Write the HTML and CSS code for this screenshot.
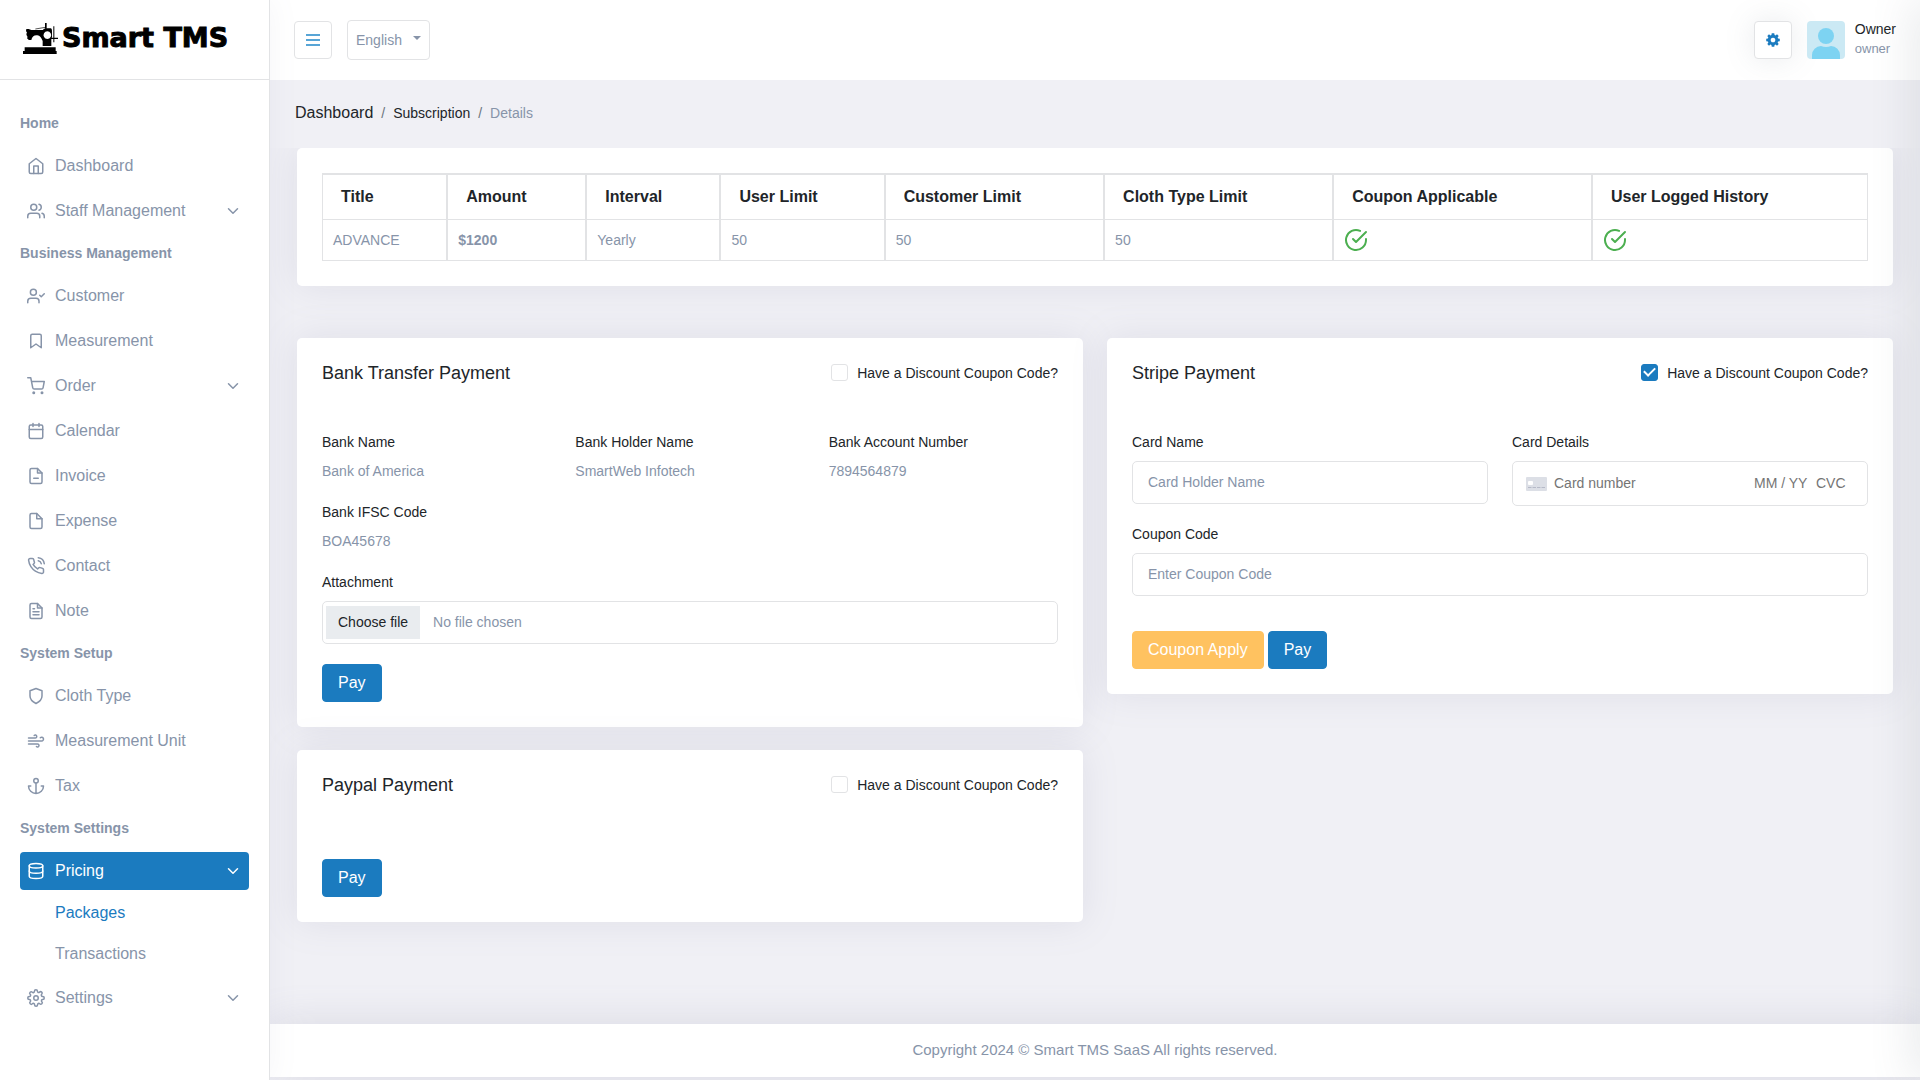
FILE: index.html
```html
<!DOCTYPE html>
<html lang="en">
<head>
<meta charset="utf-8">
<meta name="viewport" content="width=device-width, initial-scale=1">
<title>Smart TMS - Subscription Details</title>
<link rel="stylesheet" href="styles.css">
</head>
<body>
<svg class="sprite" aria-hidden="true">
  <symbol id="chevron" viewBox="0 0 24 24"><path d="M6 9l6 6 6-6"/></symbol>
  <symbol id="check-circle" viewBox="0 0 24 24"><path d="M22 11.08V12a10 10 0 1 1-5.93-9.14"/><path d="M22 4L12 14.01l-3-3"/></symbol>
</svg>
<div class="app">
  <aside class="sidebar">
    <a class="brand" href="#">
      <svg class="brand-mark" viewBox="20 14 111 102" aria-hidden="true">
        <path d="M28 93H121V104H124V113H23V104H28Z"/>
        <path fill-rule="evenodd" d="M33 38H40L48 41H84V38L92 36H106C109 37 110 40 110 44V64H108V89H82V74C78 64 74 58 66 57C56 56 50 61 48 71H39V68H36V60C33 57 32 52 35 49L32 44ZM96 45a11.500 11.500 0 1 0 0.100 0Z"/>
        <path d="M89 20H94V37H89ZM114 30H117V78H114ZM106 64H128V68H106Z"/>
        <path d="M60 38L90 33" fill="none" stroke="#000" stroke-width="2"/>
      </svg>
      <span>Smart TMS</span>
    </a>
    <nav class="nav" aria-label="Main">
      <h2 class="nav-heading">Home</h2>
      <ul class="nav-list">
        <li><a class="nav-link" href="#"><svg class="icon" viewBox="0 0 24 24"><path d="M3 9l9-7 9 7v11a2 2 0 0 1-2 2H5a2 2 0 0 1-2-2z"/><path d="M9 22V12h6v10"/></svg>Dashboard</a></li>
        <li><a class="nav-link" href="#"><svg class="icon" viewBox="0 0 24 24"><path d="M17 21v-2a4 4 0 0 0-4-4H5a4 4 0 0 0-4 4v2"/><circle cx="9" cy="7" r="4"/><path d="M23 21v-2a4 4 0 0 0-3-3.870M16 3.130a4 4 0 0 1 0 7.750"/></svg>Staff Management<svg class="icon chevron"><use href="#chevron"/></svg></a></li>
      </ul>
      <h2 class="nav-heading">Business Management</h2>
      <ul class="nav-list">
        <li><a class="nav-link" href="#"><svg class="icon" viewBox="0 0 24 24"><path d="M16 21v-2a4 4 0 0 0-4-4H5a4 4 0 0 0-4 4v2"/><circle cx="8.500" cy="7" r="4"/><path d="M17 11l2 2 4-4"/></svg>Customer</a></li>
        <li><a class="nav-link" href="#"><svg class="icon" viewBox="0 0 24 24"><path d="M19 21l-7-5-7 5V5a2 2 0 0 1 2-2h10a2 2 0 0 1 2 2z"/></svg>Measurement</a></li>
        <li><a class="nav-link" href="#"><svg class="icon" viewBox="0 0 24 24"><circle cx="9" cy="21" r="1"/><circle cx="20" cy="21" r="1"/><path d="M1 1h4l2.680 13.390a2 2 0 0 0 2 1.610h9.720a2 2 0 0 0 2-1.610L23 6H6"/></svg>Order<svg class="icon chevron"><use href="#chevron"/></svg></a></li>
        <li><a class="nav-link" href="#"><svg class="icon" viewBox="0 0 24 24"><rect x="3" y="4" width="18" height="18" rx="2"/><path d="M16 2v4M8 2v4M3 10h18"/></svg>Calendar</a></li>
        <li><a class="nav-link" href="#"><svg class="icon" viewBox="0 0 24 24"><path d="M14 2H6a2 2 0 0 0-2 2v16a2 2 0 0 0 2 2h12a2 2 0 0 0 2-2V8z"/><path d="M14 2v6h6M9 15h6"/></svg>Invoice</a></li>
        <li><a class="nav-link" href="#"><svg class="icon" viewBox="0 0 24 24"><path d="M13 2H6a2 2 0 0 0-2 2v16a2 2 0 0 0 2 2h12a2 2 0 0 0 2-2V9z"/><path d="M13 2v7h7"/></svg>Expense</a></li>
        <li><a class="nav-link" href="#"><svg class="icon" viewBox="0 0 24 24"><path d="M15.050 5A5 5 0 0 1 19 8.950M15.050 1A9 9 0 0 1 23 8.940M22 16.920v3a2 2 0 0 1-2.180 2 19.790 19.790 0 0 1-8.630-3.070 19.500 19.500 0 0 1-6-6 19.790 19.790 0 0 1-3.070-8.670A2 2 0 0 1 4.110 2h3a2 2 0 0 1 2 1.720 12.840 12.840 0 0 0 .7 2.810 2 2 0 0 1-.45 2.110L8.090 9.910a16 16 0 0 0 6 6l1.270-1.270a2 2 0 0 1 2.110-.45 12.840 12.840 0 0 0 2.810.7A2 2 0 0 1 22 16.920z"/></svg>Contact</a></li>
        <li><a class="nav-link" href="#"><svg class="icon" viewBox="0 0 24 24"><path d="M14 2H6a2 2 0 0 0-2 2v16a2 2 0 0 0 2 2h12a2 2 0 0 0 2-2V8z"/><path d="M14 2v6h6M16 13H8M16 17H8M10 9H8"/></svg>Note</a></li>
      </ul>
      <h2 class="nav-heading">System Setup</h2>
      <ul class="nav-list">
        <li><a class="nav-link" href="#"><svg class="icon" viewBox="0 0 24 24"><path d="M12 22s8-4 8-10V5l-8-3-8 3v7c0 6 8 10 8 10z"/></svg>Cloth Type</a></li>
        <li><a class="nav-link" href="#"><svg class="icon" viewBox="0 0 24 24"><path d="M9.590 4.590A2 2 0 1 1 11 8H2m10.590 11.410A2 2 0 1 0 14 16H2m15.730-8.270A2.500 2.500 0 1 1 19.500 12H2"/></svg>Measurement Unit</a></li>
        <li><a class="nav-link" href="#"><svg class="icon" viewBox="0 0 24 24"><circle cx="12" cy="5" r="3"/><path d="M12 22V8M5 12H2a10 10 0 0 0 20 0h-3"/></svg>Tax</a></li>
      </ul>
      <h2 class="nav-heading">System Settings</h2>
      <ul class="nav-list">
        <li>
          <a class="nav-link active" href="#"><svg class="icon" viewBox="0 0 24 24"><ellipse cx="12" cy="5" rx="9" ry="3"/><path d="M21 12c0 1.660-4 3-9 3s-9-1.340-9-3"/><path d="M3 5v14c0 1.660 4 3 9 3s9-1.340 9-3V5"/></svg>Pricing<svg class="icon chevron"><use href="#chevron"/></svg></a>
          <ul class="subnav">
            <li><a class="current" href="#">Packages</a></li>
            <li><a href="#">Transactions</a></li>
          </ul>
        </li>
        <li><a class="nav-link" href="#"><svg class="icon" viewBox="0 0 24 24"><circle cx="12" cy="12" r="3"/><path d="M19.400 15a1.650 1.650 0 0 0 .33 1.820l.06.06a2 2 0 0 1-2.830 2.830l-.06-.06a1.650 1.650 0 0 0-2.800 1.170V21a2 2 0 0 1-4 0v-.09A1.650 1.650 0 0 0 7.180 19.730l-.06.06a2 2 0 0 1-2.830-2.830l.06-.06a1.650 1.650 0 0 0-1.170-2.800H3a2 2 0 0 1 0-4h.09A1.650 1.650 0 0 0 4.270 7.180l-.06-.06a2 2 0 0 1 2.830-2.830l.06.06a1.650 1.650 0 0 0 2.800-1.170V3a2 2 0 0 1 4 0v.09a1.650 1.650 0 0 0 2.800 1.170l.06-.06a2 2 0 0 1 2.830 2.830l-.06.06a1.650 1.650 0 0 0 1.170 2.800H21a2 2 0 0 1 0 4h-.09a1.650 1.650 0 0 0-1.510 1z"/></svg>Settings<svg class="icon chevron"><use href="#chevron"/></svg></a></li>
      </ul>
    </nav>
  </aside>

  <div class="page">
    <header class="topbar">
      <button class="icon-button menu-button" type="button" aria-label="Toggle menu"><svg viewBox="0 0 14 14" width="14" height="14"><path d="M0 2h14M0 7h14M0 12h14" stroke="currentColor" stroke-width="2"/></svg></button>
      <div class="language">
        <select aria-label="Language"><option>English</option></select>
      </div>
      <div class="account">
        <button class="icon-button gear-button" type="button" aria-label="Settings"><svg viewBox="0 0 512 512" width="14" height="14"><path fill="currentColor" fill-rule="evenodd" d="M210 8h92l12 66 34 14 55-38 61 61-38 55 14 34 64 10v92l-64 10-14 34 38 55-61 61-55-38-34 14-12 66h-92l-12-66-34-14-55 38-61-61 38-55-14-34-64-10v-92l64-10 14-34-38-55 61-61 55 38 34-14zM256 170a86 86 0 1 0 .1 0z"/></svg></button>
        <svg class="avatar" viewBox="0 0 38 38" role="img" aria-label="Owner avatar"><rect width="38" height="38" fill="#cbe9f4"/><circle cx="19" cy="15" r="8" fill="#7dd3f2"/><path d="M5 38v-4a9 9 0 0 1 9-9q5 2 10 0a9 9 0 0 1 9 9v4z" fill="#7dd3f2"/></svg>
        <div class="account-text"><span class="account-name">Owner</span><span class="account-role">owner</span></div>
      </div>
    </header>

    <nav class="breadcrumb" aria-label="Breadcrumb">
      <a class="crumb-root" href="#">Dashboard</a><span>/</span><a href="#">Subscription</a><span>/</span><span class="crumb-current">Details</span>
    </nav>

    <main class="content">
      <section class="card">
        <table class="plan">
          <thead><tr><th>Title</th><th>Amount</th><th>Interval</th><th>User Limit</th><th>Customer Limit</th><th>Cloth Type Limit</th><th>Coupon Applicable</th><th>User Logged History</th></tr></thead>
          <tbody><tr><td>ADVANCE</td><td><b>$1200</b></td><td>Yearly</td><td>50</td><td>50</td><td>50</td><td><svg class="yes" role="img" aria-label="Yes"><use href="#check-circle"/></svg></td><td><svg class="yes" role="img" aria-label="Yes"><use href="#check-circle"/></svg></td></tr></tbody>
        </table>
      </section>

      <div class="payments">
        <div class="column">
          <section class="card">
            <div class="card-head"><h1>Bank Transfer Payment</h1><label class="coupon-toggle"><input type="checkbox">Have a Discount Coupon Code?</label></div>
            <form>
              <dl class="bank">
                <div><dt>Bank Name</dt><dd>Bank of America</dd></div>
                <div><dt>Bank Holder Name</dt><dd>SmartWeb Infotech</dd></div>
                <div><dt>Bank Account Number</dt><dd>7894564879</dd></div>
                <div><dt>Bank IFSC Code</dt><dd>BOA45678</dd></div>
              </dl>
              <div class="field">
                <label for="attachment">Attachment</label>
                <div class="control file"><span class="file-button">Choose file</span><span>No file chosen</span><input id="attachment" type="file"></div>
              </div>
              <div class="actions"><button class="btn" type="button">Pay</button></div>
            </form>
          </section>
          <section class="card">
            <div class="card-head"><h1>Paypal Payment</h1><label class="coupon-toggle"><input type="checkbox">Have a Discount Coupon Code?</label></div>
            <form><div class="actions actions-only"><button class="btn" type="button">Pay</button></div></form>
          </section>
        </div>

        <div class="column">
          <section class="card">
            <div class="card-head"><h1>Stripe Payment</h1><label class="coupon-toggle"><input type="checkbox" checked>Have a Discount Coupon Code?</label></div>
            <form>
              <div class="fields">
                <div class="field"><label for="card-name">Card Name</label><input class="control" id="card-name" type="text" placeholder="Card Holder Name"></div>
                <div class="field">
                  <label for="card-number">Card Details</label>
                  <div class="control card-details">
                    <svg viewBox="0 0 21 14" width="21" height="14" aria-hidden="true"><rect width="21" height="14" rx="1" fill="#dcdfe6"/><rect x="2" y="4" width="5" height="4" rx="1" fill="#fff"/><path d="M2 10.500h17" stroke="#b6bac8" stroke-dasharray="3.500 1"/></svg>
                    <input id="card-number" class="number" type="text" placeholder="Card number">
                    <input class="expiry" type="text" placeholder="MM / YY" aria-label="Expiry date">
                    <input class="cvc" type="text" placeholder="CVC" aria-label="Security code">
                  </div>
                </div>
                <div class="field wide"><label for="coupon">Coupon Code</label><input class="control" id="coupon" type="text" placeholder="Enter Coupon Code"></div>
              </div>
              <div class="actions actions-spaced"><button class="btn btn-warning" type="button">Coupon Apply</button><button class="btn" type="button">Pay</button></div>
            </form>
          </section>
        </div>
      </div>
    </main>

    <footer class="footer">Copyright 2024 © Smart TMS SaaS All rights reserved.</footer>
  </div>
</div>
</body>
</html>
```
FILE: styles.css
```css
:root {
  --primary: #1b7bbf;
  --muted: #8794a9;
  --ink: #212529;
  --line: #e2e3e5;
  --page: #f0f0f5;
  --shadow: 0 0 36px rgba(130, 130, 160, 0.15);
}

* { box-sizing: border-box; }

body {
  margin: 0;
  background: var(--page);
  color: var(--ink);
  font: 14px/21px "Liberation Sans", Arial, sans-serif;
}

body::after {
  content: "";
  position: fixed;
  z-index: 5;
  top: 0;
  bottom: 0;
  right: -20px;
  width: 20px;
  box-shadow: 0 0 45px rgba(120, 130, 140, 0.3);
  pointer-events: none;
}

a { color: inherit; text-decoration: none; }
ul, dl, dd, h1, h2 { margin: 0; padding: 0; }
ul { list-style: none; }
button, input, select { font: inherit; color: inherit; }
.sprite { display: none; }

.app {
  display: grid;
  grid-template-columns: 270px minmax(0, 1fr);
  min-height: 100vh;
}

/* Sidebar */
.sidebar {
  position: relative;
  z-index: 3;
  background: #fff;
  border-right: 1px solid var(--line);
  box-shadow: 0 0 28px rgba(130, 130, 160, 0.08);
  color: var(--muted);
}

.brand {
  display: flex;
  align-items: center;
  gap: 3px;
  height: 80px;
  padding: 0 22px 4px;
  border-bottom: 1px solid var(--line);
  color: #000;
  font: bold 27px/32px "DejaVu Sans", sans-serif;
  -webkit-text-stroke: 1px #000;
  white-space: nowrap;
}

.brand-mark { flex: none; width: 37px; height: 34px; }

.nav { padding: 27px 20px 20px; }
.nav-heading { padding: 6px 0 13px; font-size: 14px; line-height: 21px; }
.nav-list > li { padding-bottom: 7px; }

.nav-link {
  display: flex;
  align-items: center;
  gap: 10px;
  height: 38px;
  padding: 0 7px;
  border-radius: 4px;
  font-size: 16px;
  line-height: 24px;
}

.nav-link.active { background: var(--primary); color: #fff; }

.icon {
  flex: none;
  width: 18px;
  height: 18px;
  fill: none;
  stroke: currentColor;
  stroke-width: 2;
  stroke-linecap: round;
  stroke-linejoin: round;
}

.chevron { margin-left: auto; }

.subnav { display: grid; gap: 5px; margin-top: 5px; padding-left: 35px; font-size: 16px; line-height: 36px; }
.subnav a { display: block; }
.subnav .current { color: var(--primary); }

/* Page frame */
.page { display: flex; flex-direction: column; min-width: 0; }

.topbar {
  display: flex;
  align-items: center;
  height: 80px;
  padding: 0 24px;
  background: #fff;
}

.icon-button {
  display: grid;
  place-items: center;
  width: 38px;
  height: 38px;
  padding: 0;
  border: 1px solid var(--line);
  border-radius: 4px;
  background: #fff;
  color: var(--primary);
}

.menu-button { color: #58a5d6; }
.gear-button { box-shadow: 0 0 30px rgba(120, 130, 140, 0.16); }

.language { position: relative; margin-left: 15px; }

.language select {
  appearance: none;
  width: 83px;
  height: 40px;
  padding: 0 8px;
  border: 1px solid var(--line);
  border-radius: 4px;
  background: #fff;
  color: var(--muted);
}

.language::after {
  content: "";
  position: absolute;
  top: 16px;
  right: 9px;
  border: 4px solid transparent;
  border-top-color: var(--muted);
  border-bottom: 0;
  pointer-events: none;
}

.account { display: flex; align-items: center; margin-left: auto; }
.avatar { width: 38px; height: 38px; margin: 0 10px 0 15px; border-radius: 4px; }
.account-text { display: flex; flex-direction: column; padding-bottom: 2px; line-height: 20px; }
.account-role { color: var(--muted); font-size: 13px; }

.breadcrumb {
  position: relative;
  z-index: 1;
  display: flex;
  align-items: baseline;
  gap: 8px;
  padding: 21px 25px 23px;
  background: var(--page);
  color: #6c757d;
  line-height: 24px;
}

.breadcrumb a { color: var(--ink); }
.breadcrumb .crumb-root { font-size: 16px; }
.breadcrumb .crumb-current { color: var(--muted); }

.content { flex: 1; padding: 0 27px 24px; }

.card {
  padding: 25px;
  border-radius: 5px;
  background: #fff;
  box-shadow: var(--shadow);
}

/* Plan table */
.plan {
  width: 100%;
  border-collapse: separate;
  border-spacing: 0;
  color: var(--muted);
}

.plan th, .plan td {
  border: solid var(--line);
  border-width: 0 1px 1px;
  text-align: left;
}

.plan th {
  height: 47px;
  padding: 0 18px 2px;
  border-top-width: 2px;
  color: var(--ink);
  font-size: 16px;
}

.plan td { height: 41px; padding: 0 10px; }

.yes {
  display: block;
  width: 24px;
  height: 24px;
  fill: none;
  stroke: #4caf50;
  stroke-width: 2;
  stroke-linecap: round;
  stroke-linejoin: round;
}

/* Payment cards */
.payments {
  display: grid;
  grid-template-columns: repeat(2, minmax(0, 1fr));
  gap: 24px;
  margin-top: 52px;
}

.column { display: flex; flex-direction: column; gap: 23px; }

.card-head {
  display: flex;
  align-items: center;
  justify-content: space-between;
  height: 20px;
  margin-bottom: 49px;
}

.card-head h1 { font-size: 18px; font-weight: 400; line-height: 20px; }
.coupon-toggle { display: flex; align-items: center; gap: 9px; }

.coupon-toggle input {
  appearance: none;
  width: 17px;
  height: 17px;
  margin: 0 0 2px;
  border: 1px solid var(--line);
  border-radius: 3px;
}

.coupon-toggle input:checked {
  display: grid;
  place-items: center;
  border-color: var(--primary);
  background: var(--primary);
}

.coupon-toggle input:checked::before {
  content: "";
  width: 9px;
  height: 5px;
  margin-bottom: 3px;
  border: solid #fff;
  border-width: 0 0 2px 2px;
  transform: rotate(-45deg);
}

.bank { display: grid; grid-template-columns: repeat(3, 1fr); gap: 20px 24px; margin-bottom: 20px; }
.bank dt, .field label { display: block; margin-bottom: 8px; }
.bank dd { color: var(--muted); }

.fields { display: grid; grid-template-columns: repeat(2, minmax(0, 1fr)); gap: 18px 24px; }
.wide { grid-column: 1 / -1; }

.control {
  display: block;
  width: 100%;
  height: 43px;
  padding: 0 15px 2px;
  border: 1px solid var(--line);
  border-radius: 5px;
  background: #fff;
}

.control::placeholder { color: var(--muted); opacity: 1; }

.file {
  position: relative;
  display: flex;
  align-items: center;
  gap: 13px;
  padding: 0 3px;
  color: var(--muted);
}

.file-button { padding: 6px 12px; background: #e9ecef; color: var(--ink); }
.file input { position: absolute; inset: 0; width: 100%; opacity: 0; }

.card-details { display: flex; align-items: center; height: 45px; padding: 0 13px; }
.card-details input { min-width: 0; padding: 0; border: 0; background: none; }
.card-details input::placeholder { color: #757575; opacity: 1; }
.card-details .number { flex: 1; margin-left: 7px; }
.card-details .expiry { width: 62px; }
.card-details .cvc { width: 38px; }

.actions { display: flex; gap: 4px; padding-top: 20px; }
.actions-only { padding-top: 15px; }
.actions-spaced { padding-top: 35px; }

.btn {
  height: 38px;
  padding: 0 15px;
  border: 1px solid var(--primary);
  border-radius: 4px;
  background: var(--primary);
  color: #fff;
  font-size: 16px;
  line-height: 24px;
}

.btn-warning { border-color: #ffc260; background: #ffc260; }

.footer {
  margin-bottom: 3px;
  padding: 15px 16px 17px;
  background: #fff;
  box-shadow: 0 0 40px rgba(130, 130, 160, 0.2);
  color: var(--muted);
  font-size: 15px;
  text-align: center;
}
```
